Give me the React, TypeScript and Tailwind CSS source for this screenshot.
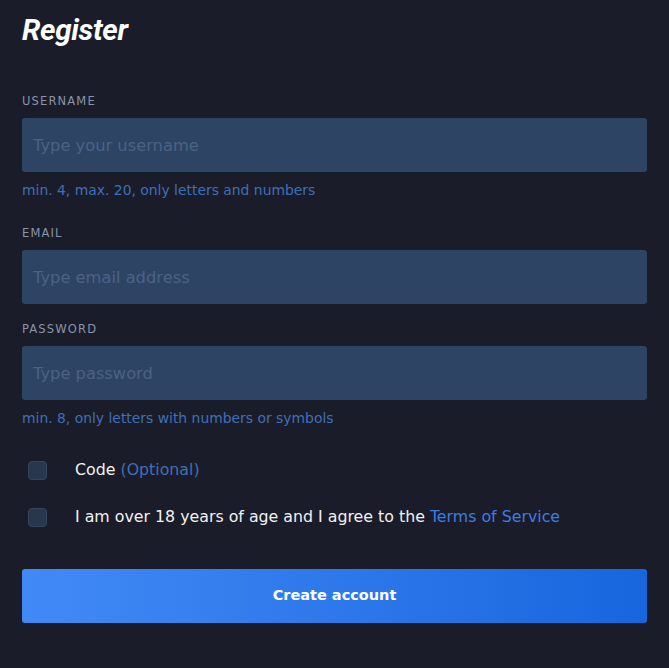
import { useState } from 'react';

const FONT = "font-['DejaVu_Sans',sans-serif]";

function Field({ label, placeholder, hint, type = 'text' }: { label: string; placeholder: string; hint?: string; type?: string }) {
  return (
    <div className="flex flex-col">
      <label className="text-[11.5px] tracking-[0.1em] text-[#8894aa] uppercase leading-[12px] mb-[11px]">{label}</label>
      <input
        type={type}
        placeholder={placeholder}
        className="h-[54px] w-full rounded-[3px] bg-[#2e4464] px-[11px] text-[16.3px] text-white placeholder:text-[#4b6286] outline-none"
      />
      {hint && <p className="mt-[10px] text-[13.9px] leading-[16px] text-[#3f6fb8]">{hint}</p>}
    </div>
  );
}

function Check({ children }: { children: React.ReactNode }) {
  const [on, setOn] = useState(false);
  return (
    <label className="flex items-center cursor-pointer">
      <span className="ml-[6px] mr-[28px] h-[19px] w-[19px] rounded-[4px] border border-[#34465f] bg-[#28374e] flex items-center justify-center">
        <input type="checkbox" checked={on} onChange={() => setOn(!on)} className="hidden" />
      </span>
      <span className="text-[15.8px] leading-[24px] text-[#f1f1f1]">{children}</span>
    </label>
  );
}

export default function App() {
  return (
    <div className={`min-h-screen bg-[#1a1d29] px-[22px] pt-[11px] ${FONT}`}>
      <h1 className="font-['Roboto',sans-serif] text-[29.5px] font-bold italic text-white leading-[38px] tracking-[-0.01em]">Register</h1>

      <div className="mt-[46px] flex flex-col">
        <Field label="Username" placeholder="Type your username" hint="min. 4, max. 20, only letters and numbers" />
        <div className="mt-[29px]">
          <Field label="Email" placeholder="Type email address" />
        </div>
        <div className="mt-[19px]">
          <Field label="Password" placeholder="Type password" type="password" hint="min. 8, only letters with numbers or symbols" />
        </div>
      </div>

      <div className="mt-[32px] flex flex-col gap-[23px]">
        <Check>
          Code <span className="text-[#3f6fb8]">(Optional)</span>
        </Check>
        <Check>
          I am over 18 years of age and I agree to the <a href="#" className="text-[#3d7de0]">Terms of Service</a>
        </Check>
      </div>

      <button className="mt-[40px] h-[54px] w-full rounded-[3px] bg-gradient-to-r from-[#418af6] to-[#1766de] text-[14.5px] font-bold text-white">
        Create account
      </button>
    </div>
  );
}
